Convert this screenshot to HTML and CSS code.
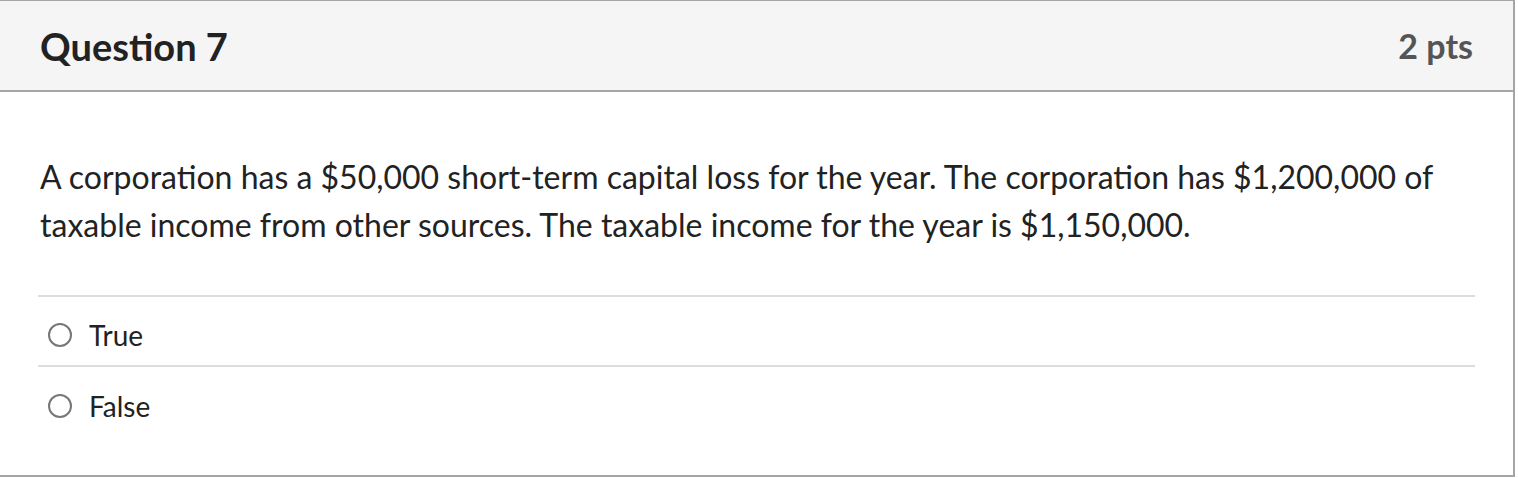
FILE: index.html
```html
<!DOCTYPE html>
<html>
<head>
<meta charset="utf-8">
<link rel="stylesheet" href="styles.css">
</head>
<body>
<div class="question">
  <div class="header">
    <div class="title">Question 7</div>
    <div class="points">2 pts</div>
  </div>
  <div class="content">
    <div class="text">A corporation has a $50,000 short-term capital loss for the year. The corporation has $1,200,000 of taxable income from other sources. The taxable income for the year is $1,150,000.</div>
    <div class="answers">
      <div class="answer"><span class="radio"></span><span class="label">True</span></div>
      <div class="answer"><span class="radio"></span><span class="label">False</span></div>
    </div>
  </div>
</div>
</body>
</html>
```
FILE: styles.css
```css
html, body {
  margin: 0;
  padding: 0;
  background: #fff;
}
body {
  font-family: Lato, "Open Sans", sans-serif;
  color: #222;
}
.question {
  width: 1515px;
  height: 477px;
  box-sizing: border-box;
  border-top: 1px solid #a5a5a5;
  border-right: 2px solid #a5a5a5;
  border-bottom: 2px solid #a5a5a5;
}
.header {
  display: flex;
  justify-content: space-between;
  align-items: center;
  height: 91px;
  box-sizing: border-box;
  background: #f5f5f5;
  border-bottom: 2px solid #a5a5a5;
  padding: 0 40px 0 40px;
}
.title {
  font-weight: 700;
  font-size: 38px;
  color: #222;
}
.points {
  font-weight: 700;
  font-size: 34px;
  color: #555;
}
.content {
  padding: 0 38px 0 38px;
}
.text {
  box-sizing: border-box;
  padding: 61px 2px 0 2px;
  height: 203px;
  font-size: 32px;
  line-height: 48px;
  color: #222;
}
.answers {
  border-top: 2px solid #dddddd;
}
.answer {
  display: flex;
  align-items: center;
  box-sizing: border-box;
  height: 70px;
  padding-top: 8px;
  border-bottom: 2px solid #dddddd;
}
.answer:last-child {
  border-bottom: none;
}
.radio {
  width: 20px;
  height: 20px;
  border: 2px solid #777;
  border-radius: 50%;
  margin-left: 10px;
  margin-right: 17px;
  flex: none;
}
.label {
  font-size: 28px;
  color: #222;
}
```
